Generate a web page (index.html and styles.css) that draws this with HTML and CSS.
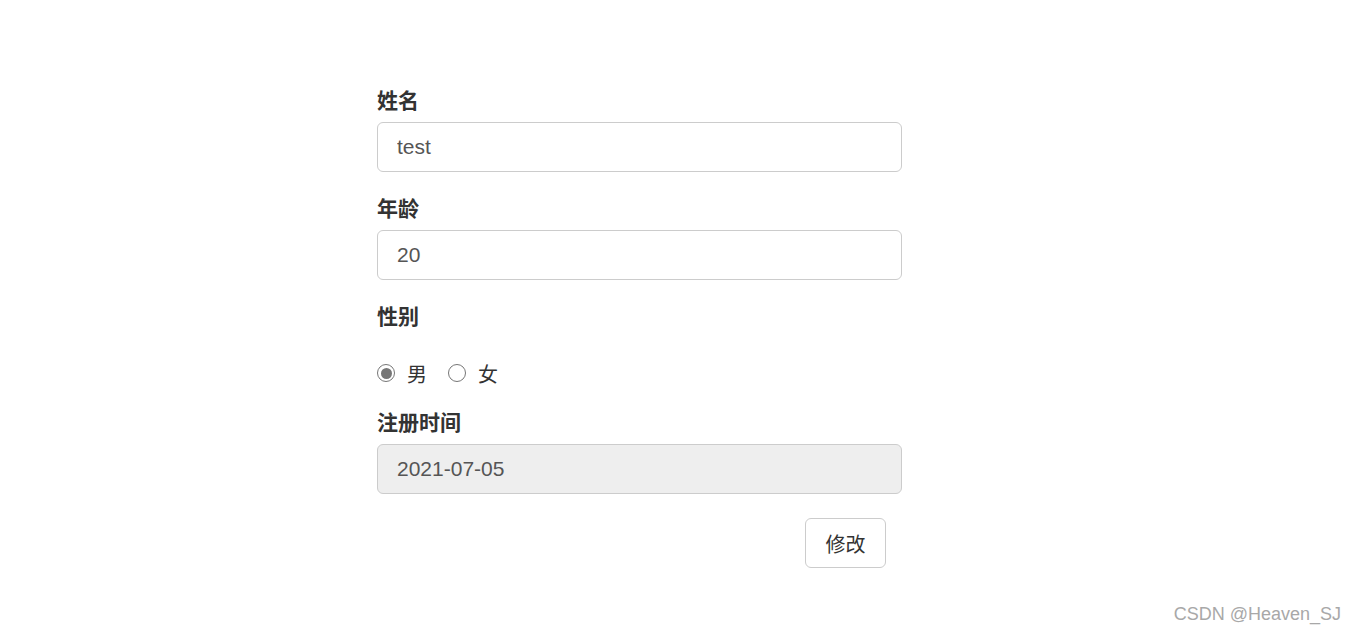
FILE: index.html
```html
<!DOCTYPE html>
<html lang="zh">
<head>
<meta charset="utf-8">
<title>修改</title>
<link rel="stylesheet" href="styles.css">
</head>
<body>
<form class="form">
  <div class="group">
    <label class="label">姓名</label>
    <input class="input" type="text" value="test">
  </div>
  <div class="group">
    <label class="label">年龄</label>
    <input class="input" type="text" value="20">
  </div>
  <div class="group">
    <label class="label">性别</label>
    <div class="radios">
      <label class="radio"><span class="dot checked"></span>男</label>
      <label class="radio"><span class="dot"></span>女</label>
    </div>
  </div>
  <div class="group">
    <label class="label">注册时间</label>
    <input class="input disabled" type="text" value="2021-07-05" disabled>
  </div>
  <div class="actions">
    <button class="btn" type="button">修改</button>
  </div>
</form>
<div class="watermark">CSDN @Heaven_SJ</div>
</body>
</html>
```
FILE: styles.css
```css
html, body {
  margin: 0;
  padding: 0;
  background: #fff;
}
body {
  font-family: "Liberation Sans", "Noto Sans CJK SC", sans-serif;
  color: #333;
  width: 1356px;
  height: 634px;
  position: relative;
  overflow: hidden;
}
.form {
  width: 525px;
  margin: 0 0 0 377px;
  padding-top: 86px;
  display: flex;
  flex-direction: column;
}
.group {
  display: flex;
  flex-direction: column;
  margin-bottom: 22px;
}
.label {
  display: block;
  font-size: 21px;
  font-weight: bold;
  line-height: 30px;
  height: 30px;
  margin-bottom: 6px;
  color: #333;
}
.input {
  box-sizing: border-box;
  width: 525px;
  height: 50px;
  border: 1px solid #ccc;
  border-radius: 6px;
  padding: 0 19px;
  font-family: "Liberation Sans", "Noto Sans CJK SC", sans-serif;
  font-size: 21px;
  color: #555;
  background: #fff;
  outline: none;
  margin: 0;
}
.input.disabled {
  background: #eee;
  color: #555;
  -webkit-text-fill-color: #555;
  opacity: 1;
}
.radios {
  display: flex;
  align-items: center;
  height: 30px;
  margin-top: 20px;
  margin-bottom: -2px;
}
.radio {
  display: flex;
  align-items: center;
  font-size: 20px;
  color: #333;
  margin-right: 21px;
}
.dot {
  box-sizing: border-box;
  width: 18px;
  height: 18px;
  border: 1.5px solid #767676;
  border-radius: 50%;
  margin-right: 12px;
  display: flex;
  align-items: center;
  justify-content: center;
  background: #fff;
}
.dot.checked::after {
  content: "";
  width: 11px;
  height: 11px;
  border-radius: 50%;
  background: #767676;
}
.actions {
  display: flex;
  justify-content: flex-end;
  padding-right: 16px;
  margin-top: 2px;
}
.btn {
  box-sizing: border-box;
  width: 81px;
  height: 50px;
  border: 1px solid #ccc;
  border-radius: 6px;
  background: #fff;
  font-family: "Liberation Sans", "Noto Sans CJK SC", sans-serif;
  font-size: 20px;
  color: #333;
  padding: 0;
}
.watermark {
  position: absolute;
  right: 15px;
  bottom: 9px;
  font-size: 18px;
  color: #a8a8a8;
}
```
